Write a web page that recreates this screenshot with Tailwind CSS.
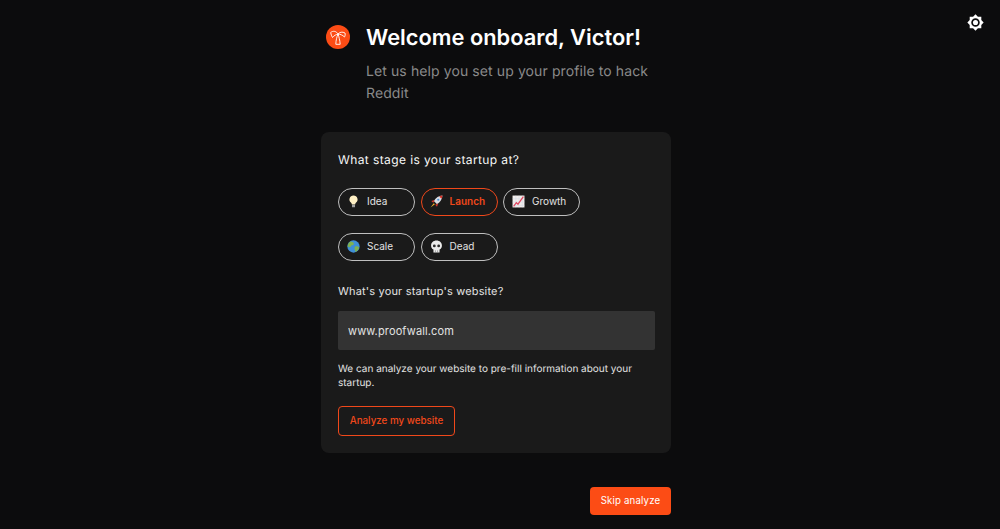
<!DOCTYPE html>
<html lang="en">
<head>
    <meta charset="UTF-8">
    <title>Welcome onboard</title>
    <script src="https://cdn.jsdelivr.net/npm/@tailwindcss/browser@4"></script>
</head>
<body class="bg-[#0c0c0d] font-['Inter',sans-serif] [text-rendering:geometricPrecision] h-[529px] overflow-hidden relative">
    <!-- theme toggle -->
    <button class="absolute left-[967px] top-[14px] w-[17px] h-[17px] text-white">
        <svg viewBox="0 0 24 24" class="w-[17px] h-[17px]" fill="currentColor">
            <path fill-rule="evenodd" d="M12 .5l3.4 3.3h4.8v4.8l3.3 3.4-3.3 3.4v4.8h-4.8L12 23.5l-3.4-3.3H3.8v-4.8L.5 12l3.3-3.4V3.8h4.8L12 .5zM12 6a6 6 0 100 12 6 6 0 000-12z"/>
            <circle cx="12" cy="12" r="3.6"/>
        </svg>
    </button>

    <main class="w-[350px] ml-[321px] pt-[22px] flex flex-col">
        <!-- header -->
        <div class="flex pl-[5px]">
            <div class="w-[24px] h-[24px] mt-[3px] rounded-full bg-[#fc4c15] flex items-center justify-center shrink-0">
                <svg viewBox="0 0 16 16" class="w-[16px] h-[16px]" fill="none" stroke="white" stroke-width=".9" stroke-linecap="round" stroke-linejoin="round">
                    <path d="M8 5C6.500 2 3 1.500 .7 3.500 1 5.500 1.500 7 2.500 8.500 4 6.500 6 5.500 8 5z"/>
                    <path d="M8 5C9.500 3 12.500 2.500 15 4 15.500 5.500 15 7 14.500 8 12.500 6 10 5 8 5z"/>
                    <path d="M7.800 5.500C6.800 8 6 11 5.800 15.300H10.200C9.800 11 9 8 8.200 5.500"/>
                </svg>
            </div>
            <div class="ml-[16px] mt-[1px]">
                <h1 class="text-[21.85px] leading-[30px] font-semibold text-white">Welcome onboard, Victor!</h1>
                <p class="mt-[8px] w-[295px] text-[14px] leading-[22px] tracking-[0.1px] text-[#8a8a8a]">Let us help you set up your profile to hack Reddit</p>
            </div>
        </div>

        <!-- card -->
        <section class="mt-[27px] h-[321px] rounded-[8px] bg-[#1a1a1a] px-[17px] pt-[19px]">
            <h2 class="text-[12px] leading-[18px] font-normal tracking-[0.4px] text-[#f7f7f7]">What stage is your startup at?</h2>

            <div class="mt-[19px] grid grid-cols-[77px_77px_77px] gap-x-[5.5px] gap-y-[16.500px]">
                <button class="h-[28px] pb-[1px] rounded-full border border-[#bfbfbf] flex items-center text-[10px] text-[#e2e2e2] pl-[8px]">
                    <svg viewBox="0 0 12 12" class="w-[13px] h-[13px]"><path d="M6 .5a3.700 3.700 0 0 0-2.200 6.700c.4.4.6 1 .7 1.600h3c.1-.6.3-1.200.7-1.600A3.700 3.700 0 0 0 6 .5z" fill="#fff0c4"/><rect x="4.600" y="9" width="2.800" height="2.300" fill="#a0a0a0"/></svg>
                    <span class="ml-[7px]">Idea</span>
                </button>
                <button class="h-[28px] pb-[1px] rounded-full border border-[#f0481a] flex items-center text-[10px] font-semibold text-[#f0481a] pl-[8px]">
                    <svg viewBox="0 0 12 12" class="w-[13px] h-[13px]"><path d="M11.500 .5C8 .8 5.500 2.500 3.500 5.500L6.500 8.500C9.500 6.500 11.200 4 11.500 .5z" fill="#d8dce2"/><path d="M11.500 .5C10 .6 9.200 1 8.500 1.400L10.600 3.500C11 2.800 11.400 2 11.500 .5z" fill="#d9362b"/><circle cx="7.600" cy="4.400" r="1" fill="#4a90d9"/><path d="M4.200 4.500 1.200 5.500 3 7.200zM7.500 7.800 6.500 10.800 4.800 9z" fill="#d9362b"/><path d="M3.500 7.500.5 11.500 4.500 8.500z" fill="#f7b52c"/></svg>
                    <span class="ml-[7px]">Launch</span>
                </button>
                <button class="h-[28px] pb-[1px] rounded-full border border-[#bfbfbf] flex items-center text-[10px] text-[#e2e2e2] pl-[8px]">
                    <svg viewBox="0 0 12 12" class="w-[13px] h-[13px]"><rect x=".5" y=".5" width="11" height="11" fill="#f2eeec"/><path d="M3.500.5v11M6.500.5v11M9.500.5v11M.5 3.500h11M.5 6.500h11M.5 9.500h11" stroke="#c9d4e6" stroke-width=".4"/><path d="M1.500 10.500 4 7l1.500 1.500L10.500 1.500" fill="none" stroke="#e0455e" stroke-width="1.100"/></svg>
                    <span class="ml-[7px]">Growth</span>
                </button>
                <button class="h-[28px] rounded-full border border-[#bfbfbf] flex items-center text-[10px] text-[#e2e2e2] pl-[8px]">
                    <svg viewBox="0 0 12 12" class="w-[13px] h-[13px]"><circle cx="6" cy="6" r="5.700" fill="#3f8fd6"/><path d="M3 1.300C5 1.300 6.800 2.300 6.300 4 5.500 5.300 4 4.500 3.500 6 3 7 2 6.500.6 6 .6 4 1.500 2.500 3 1.300zM7.500 6c1.500-.5 3 0 3.700 1-.5 2-2 3.700-3.200 4C7 9 6.500 7 7.500 6z" fill="#7fb24f"/></svg>
                    <span class="ml-[7px]">Scale</span>
                </button>
                <button class="h-[28px] rounded-full border border-[#bfbfbf] flex items-center text-[10px] text-[#e2e2e2] pl-[8px]">
                    <svg viewBox="0 0 12 12" class="w-[13px] h-[13px]"><path d="M6 .5C3 .5 1 2.600 1 5.200c0 1.600.8 2.900 2.200 3.500V11.500h5.600V8.700c1.400-.6 2.200-1.900 2.200-3.500C11 2.600 9 .5 6 .5z" fill="#ececec"/><circle cx="4" cy="5.500" r="1.300" fill="#2c2c2c"/><circle cx="8" cy="5.500" r="1.300" fill="#2c2c2c"/><path d="M5 11.500V9.500M7 11.500V9.500" stroke="#666" stroke-width=".5"/></svg>
                    <span class="ml-[7px]">Dead</span>
                </button>
            </div>

            <label class="block mt-[22.500px] text-[11px] leading-[16px] tracking-[0.17px] text-[#e2e2e2]">What's your startup's website?</label>
            <input type="text" value="www.proofwall.com" class="block mt-[12px] w-[316.500px] h-[39px] rounded-[2px] bg-[#333333] px-[10px] text-[11px] tracking-[0.14px] text-[#e2e2e2] outline-none">

            <p class="mt-[12px] text-[10px] leading-[14px] text-[#e2e2e2]">We can analyze your website to pre-fill information about your startup.</p>

            <button class="mt-[16px] w-[117px] h-[30px] rounded-[4px] border border-[#f0481a] text-[9.8px] font-medium text-[#f0481a]">Analyze my website</button>
        </section>

        <div class="mt-[34px] flex justify-end">
            <button class="w-[81px] h-[28px] rounded-[4px] bg-[#fc4c15] text-[9.7px] font-normal tracking-[0.15px] text-white">Skip analyze</button>
        </div>
    </main>
</body>
</html>
